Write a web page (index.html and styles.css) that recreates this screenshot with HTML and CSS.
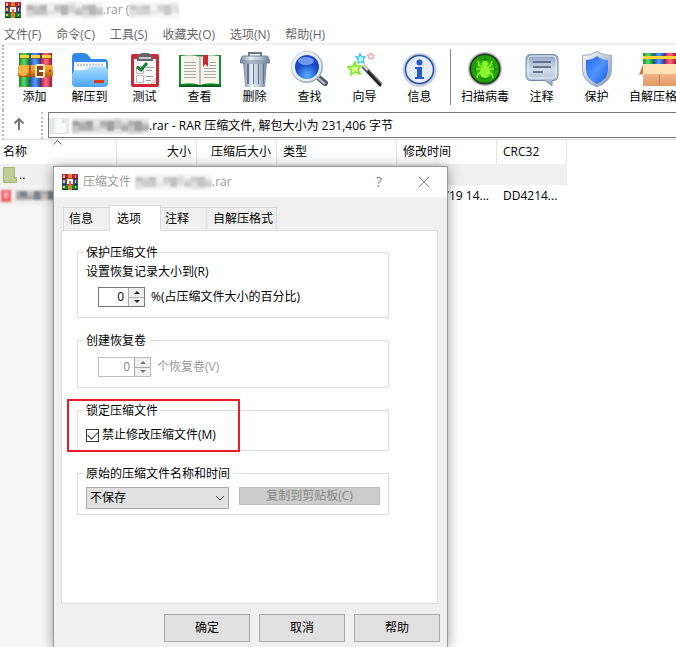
FILE: index.html
```html
<!DOCTYPE html>
<html lang="zh-CN">
<head>
<meta charset="utf-8">
<meta name="viewport" content="width=device-width, initial-scale=1">
<title>WinRAR</title>
<link rel="stylesheet" href="styles.css">
</head>
<body>
<svg class="defs" aria-hidden="true">
  <defs>
    <linearGradient id="gGreen" x2="1"><stop stop-color="#178a2d"/><stop offset=".45" stop-color="#5fd873"/><stop offset="1" stop-color="#0b6d22"/></linearGradient>
    <linearGradient id="gBlue" x2="1"><stop stop-color="#1b50b8"/><stop offset=".45" stop-color="#5b9cf7"/><stop offset="1" stop-color="#163f9c"/></linearGradient>
    <linearGradient id="gRed" x2="1"><stop stop-color="#c01836"/><stop offset=".45" stop-color="#ff6c85"/><stop offset="1" stop-color="#a80f2c"/></linearGradient>
    <linearGradient id="gBelt" x2="0" y2="1"><stop stop-color="#f7b53c"/><stop offset=".5" stop-color="#e8901c"/><stop offset="1" stop-color="#a95a08"/></linearGradient>
    <linearGradient id="gFolder" x2="0" y2="1"><stop stop-color="#a5dcff"/><stop offset="1" stop-color="#4ba6f5"/></linearGradient>
    <linearGradient id="gSteel" x2="1"><stop stop-color="#7c8ca3"/><stop offset=".35" stop-color="#e8eef5"/><stop offset=".65" stop-color="#bcc9d9"/><stop offset="1" stop-color="#74849c"/></linearGradient>
    <linearGradient id="gBubble" x2="0" y2="1"><stop stop-color="#8c9fbd"/><stop offset=".5" stop-color="#d3deec"/><stop offset="1" stop-color="#9aaeca"/></linearGradient>
    <linearGradient id="gRim" x2="1" y2="1"><stop stop-color="#fff"/><stop offset="1" stop-color="#8494ab"/></linearGradient>
    <linearGradient id="gShield" x2="1" y2="1"><stop stop-color="#2665e8"/><stop offset=".5" stop-color="#4f94ff"/><stop offset="1" stop-color="#1d58e0"/></linearGradient>
    <linearGradient id="gBox" x2="0" y2="1"><stop stop-color="#f9c8a2"/><stop offset="1" stop-color="#e39a68"/></linearGradient>
    <radialGradient id="gLens" cy=".85"><stop stop-color="#58b0ff"/><stop offset="1" stop-color="#1747c8"/></radialGradient>
    <radialGradient id="gScan"><stop stop-color="#55e80c"/><stop offset="1" stop-color="#1c9604"/></radialGradient>

    <symbol id="rar" viewBox="0 0 16 16">
      <path fill="#b61c4c" d="M0 0h16v5H0z"/><path fill="#2c55b5" d="M0 5h16v6H0z"/><path fill="#168239" d="M0 11h16v5H0z"/>
      <path fill="#551630" d="M0 4h16v1H0z"/><path fill="#14286c" d="M0 10h16v1H0z"/><path fill="#08481b" d="M0 15h16v1H0z"/>
      <path fill="#f1c04e" d="M1 1h2v3H1zM1 6h2v3H1zM1 12h2v2H1zM13 1h1v3h-1zM13 6h1v3h-1zM13 12h1v2h-1z"/>
      <path fill="#d58428" d="M6 0h4v16H6z"/><path fill="#9d351b" d="M4 4h8v7H4z"/><path fill="#fff" d="M5 10V6q0-1 1-1h4q1 0 1 1v4H9V7H7v3z"/><path fill="#e96534" d="M7 7h2v4H7z"/>
    </symbol>
    <symbol id="mosaic" viewBox="0 0 77 16">
      <path fill="#f3f3f3" d="M0 0h77v16H0z"/>
      <path fill="#d6d6d6" d="M0 3h21v10H0zM28 3h21v8H28zM49 5h28v8H49z"/>
      <path fill="#b4b4b4" d="M1 3h6v5H1zM14 3h7v5h-7zM35 3h7v10h-7zM63 3h7v10h-7z"/>
      <path fill="#c2c2c2" d="M7 5h7v8H7zM14 8h7v5h-7zM28 3h7v5h-7zM49 8h7v5h-7zM56 3h7v5h-7zM70 8h7v5h-7z"/>
      <path fill="#e4e4e4" d="M0 13h7v3H0zM21 8h7v5h-7zM42 0h7v3h-7zM56 13h14v3H56z"/>
    </symbol>
  </defs>
</svg>

<main class="window">
  <header class="titlebar">
    <svg class="app-icon"><use href="#rar"/></svg>
    <svg class="mosaic"><use href="#mosaic"/></svg>
    <span>.rar (</span>
    <svg class="mosaic mosaic-short" viewBox="0 0 53 16" preserveAspectRatio="xMinYMid slice"><use href="#mosaic" width="77" height="16"/></svg>
  </header>

  <nav class="menu">
    <a href="#">文件(F)</a><a href="#">命令(C)</a><a href="#">工具(S)</a><a href="#">收藏夹(O)</a><a href="#">选项(N)</a><a href="#">帮助(H)</a>
  </nav>

  <div class="toolbar">
    <button class="tool"><svg viewBox="0 0 48 40">
      <path fill="url(#gGreen)" d="M8 4h11v34H8z"/><path fill="url(#gBlue)" d="M19 4h11v34H19z"/><path fill="url(#gRed)" d="M30 4h11v34H30z"/>
      <path fill="#ffd633" d="M9 6h9v3H9zM20 6h9v3h-9zM31 6h9v3h-9z"/><path fill="#795000" opacity=".5" d="M8 9h33v1H8z"/>
      <rect x="7" y="16" width="35" height="12" rx="2" fill="url(#gBelt)"/><circle cx="12" cy="22" r="5" fill="#f5b64e"/><path fill="#ab5d0b" d="M18 16h2v12h-2z"/>
      <rect x="25" y="16" width="8" height="12" rx="1" fill="#8c4513" stroke="#f3e3cd" stroke-width="2"/><path stroke="#fff" stroke-width="2" d="M28 22h5"/><circle cx="39" cy="22" r="1" fill="#633400"/>
    </svg>添加</button>
    <button class="tool"><svg viewBox="0 0 48 40">
      <path fill="#318ae8" d="M6 8q0-4 4-4h8q3 0 5 3l2 3h13q4 0 4 4v17H6z"/><path fill="#fff" d="M8 13h32v14H8z"/><path stroke="#bccbdc" stroke-width="3" stroke-dasharray="2 1" d="M11 16h27"/>
      <path fill="url(#gFolder)" d="M6 26q1-5 5-5h6q3 0 5-2 1-1 4-1h12q4 0 4 4v12q0 4-4 4H10q-4 0-4-4z"/><path fill="#df391f" d="M28 31h10v3H28z"/>
    </svg>解压到</button>
    <button class="tool"><svg viewBox="0 0 48 40">
      <rect x="10" y="5" width="28" height="33" rx="2" fill="#cc2732"/><path fill="#f7f7f6" d="M13 10h22v25H13z"/><path fill="#d9d9d9" d="m28 35 7-7v7z"/>
      <path fill="#62666b" d="M16 12V7q0-1 3-1l1-2h8l1 2q3 0 3 1v5z"/><path fill="#c5c9ce" d="M18 8h12v2H18z"/>
      <path fill="none" stroke="#b9b9b9" d="M15.500 17.500h7v7h-7zM15.500 26.500h7v7h-7z"/><path stroke="#9d9d9d" d="M25 18.500h8M25 21.500h6M25 27.500h7M25 31.500h5"/><path fill="none" stroke="#17803a" stroke-width="3" d="m16 18 4 3 6-7"/>
    </svg>测试</button>
    <button class="tool"><svg viewBox="0 0 48 40">
      <path fill="#178c32" d="M3 6h42v32H3z"/><path fill="#075d20" d="M3 36h42v2H3z"/><path fill="#f7f5e9" d="M5 7q12-2 19 1 7-3 19-1v28q-12-2-19 1-7-3-19-1z"/>
      <path fill="#c0beb2" d="M23 7h2v29h-2z"/><path stroke="#aaa" d="M8 13.500h12M8 16.500h12M8 19.500h12M8 22.500h12M8 25.500h12M8 28.500h12M28 19.500h12M28 22.500h12M28 25.500h12M28 28.500h12M33 13.500h7M33 16.500h7"/><path fill="#cd2634" d="M27 6h5v12l-2.500-3-2.500 3z"/>
    </svg>查看</button>
    <button class="tool"><svg viewBox="0 0 48 40">
      <path fill="none" stroke="#69788c" stroke-width="2" d="M18 7V4h12v3"/><path fill="url(#gSteel)" d="M12 12h24l-2 26H14z"/><path fill="#61738c" d="M16 15h2v20h-2zM22 15h1v20h-1zM27 15h1v20h-1zM32 15h1v20h-1z"/>
      <path fill="url(#gSteel)" stroke="#73849c" d="M11.500 7h25l2 4v3h-29v-3z"/><path stroke="#73849c" d="M9 12h30"/>
    </svg>删除</button>
    <button class="tool"><svg viewBox="0 0 48 40">
      <path stroke="#525b68" stroke-width="6" stroke-linecap="round" d="m33 29 6 5"/><path stroke="#bac3cd" stroke-width="2" d="m31 28 8 7"/>
      <circle cx="21" cy="18" r="16" fill="#a3afc0"/><circle cx="20.500" cy="17.500" r="15" fill="#e9eef4"/><circle cx="21" cy="18" r="12" fill="url(#gLens)"/><ellipse cx="20" cy="12" rx="8" ry="4" fill="#a9cfff" opacity=".6"/>
    </svg>查找</button>
    <button class="tool"><svg viewBox="0 0 48 40">
      <path stroke="#444" stroke-width="4" d="m22 17 18 19"/><path stroke="#222" stroke-width="2" d="m27 23 13 14"/><path stroke="#ccc" stroke-width="3" d="m22 16 5 5"/><path stroke="#999" d="m29 22 12 13"/>
      <path fill="#d9ff8c" stroke="#79e626" stroke-width="1.500" d="m14 13 1 4 5 0-3 4 2 4-5-2-4 3v-5l-3-3 5-1z"/>
      <path fill="#cffbff" stroke="#35c7e8" stroke-width="1.300" d="m19 5 2 3 3 0-2 3 1 3-3-1-3 1v-4l-2-2 3 0z"/><path fill="#fff" stroke="#f18a8a" d="m30 4 1 2 2 0-1 2 0 2-2-1-2 1v-2l-2-2h3z"/>
    </svg>向导</button>
    <button class="tool"><svg viewBox="0 0 48 40">
      <circle cx="23.500" cy="21" r="17" fill="#c7cfda"/><circle cx="23.500" cy="20.500" r="14" fill="#e6edf6" stroke="#244fa8" stroke-width="1.500"/><circle cx="23.500" cy="13.500" r="3" fill="#2859cf"/><path fill="#2859cf" d="M19 18h7v10h2v2h-9v-2h2v-8h-2z"/>
    </svg>信息</button>
    <span class="separator"></span>
    <button class="tool"><svg viewBox="0 0 48 40">
      <circle cx="24" cy="20" r="17" fill="#b7bcbb"/><circle cx="24" cy="20" r="15.500" fill="#20312a"/><circle cx="24" cy="20" r="14" fill="url(#gScan)"/>
      <path fill="none" stroke="#148006" d="M24 6v28M10 20h28"/><circle cx="24" cy="20" r="10" fill="none" stroke="#148006"/>
      <path fill="none" stroke="#8cf52f" stroke-width="1.500" d="m17 12 1 4 4 3M31 12l-1 4-4 3M15 20h18M16 29l1-4 4-2M32 29l-1-4-4-2"/><ellipse cx="24" cy="23" rx="5" ry="6" fill="#8cf52f"/><circle cx="24" cy="15" r="3" fill="#8cf52f"/>
    </svg>扫描病毒</button>
    <button class="tool"><svg viewBox="0 0 48 40">
      <path fill="url(#gBubble)" stroke="#7388a8" d="M13 5.500h22q5 0 5 5v16q0 5-5 5h-1v5l-7-5H13q-5 0-5-5v-16q0-5 5-5z"/><path fill="none" stroke="#edf2f8" d="M13 7h22q3 0 3 4v14q0 4-3 4H13q-3 0-3-4V11q0-4 3-4z"/><path stroke="#475871" stroke-width="1.500" d="M15 13h18M15 18h18M15 23h10"/>
    </svg>注释</button>
    <button class="tool"><svg viewBox="0 0 48 40">
      <path fill="url(#gRim)" stroke="#9baabe" d="M24 2.500q6 4 14.500 4v14q0 12-14.500 17.500Q9.500 32.500 9.500 20.500v-14Q18 6.500 24 2.500z"/><path fill="url(#gShield)" d="M24 7q5 4 11 4v10q0 9-11 14-11-5-11-14V11q6 0 11-4z"/>
    </svg>保护</button>
    <button class="tool tool-wide"><svg viewBox="0 0 48 40">
      <path fill="url(#gGreen)" d="M8 4h11v14H8z"/><path fill="url(#gBlue)" d="M19 4h11v14H19z"/><path fill="url(#gRed)" d="M30 4h11v14H30z"/><path fill="#ffd633" d="M8 7h33v3H8z"/>
      <path fill="url(#gBox)" d="M8 16h34v21H8z"/><path fill="#ffe2b4" d="M8 15h34l5 10H8z"/><path fill="#d17a45" d="m8 15-4 11 4-1zM24 26h1v11h-1z"/>
    </svg>自解压格式</button>
  </div>

  <div class="address">
    <button class="up" aria-label="上移"><svg viewBox="0 0 12 14"><path fill="none" stroke="#777" stroke-width="2" d="M6 13V2M1.500 6.500 6 2l4.500 4.500"/></svg></button>
    <div class="path">
      <svg class="paper" viewBox="0 0 20 16"><path fill="#e7e9e9" d="M0 0h20v16H0z"/><path fill="#fafafa" d="M6 1h7l4 4v10H6z"/><path fill="#dfe2e2" d="M13 1v4h4z"/></svg>
      <svg class="mosaic mosaic-dark"><use href="#mosaic"/></svg>
      <span>.rar - RAR 压缩文件, 解包大小为 231,406 字节</span>
    </div>
  </div>

  <section class="files">
    <table>
      <colgroup><col class="c-name"><col class="c-size"><col class="c-size"><col class="c-type"><col class="c-date"><col class="c-crc"></colgroup>
      <thead><tr><th class="sorted">名称<svg viewBox="0 0 9 5"><path fill="none" stroke="#666" d="m.5 4.500 4-4 4 4"/></svg></th><th class="num">大小</th><th class="num">压缩后大小</th><th>类型</th><th>修改时间</th><th>CRC32</th></tr></thead>
      <tbody>
        <tr class="current"><td><span class="entry"><svg class="folder" viewBox="0 0 14 16"><path fill="#c2cc98" stroke="#a9b56e" d="M.500.500h11v10h2v5H.500z"/></svg>..</span></td><td></td><td></td><td></td><td></td><td></td></tr>
        <tr><td><span class="entry"><svg class="blurred" viewBox="0 0 54 18"><path fill="#eee" d="M0 0h54v18H0z"/><path fill="#ee606b" d="M1 3h10v12H1z"/><path fill="#f9b4b8" d="M4 5h4v6H4z"/><path fill="#aaa" d="M16 4h38v9H16z"/><path fill="#77818c" d="M20 4h7v6h-7zM34 4h6v9h-6zM48 4h6v8h-6z"/><path fill="#c9c2ba" d="M27 4h7v4h-7zM42 7h6v6h-6z"/></svg></span></td><td></td><td></td><td></td><td class="num">/19 14...</td><td>DD4214...</td></tr>
      </tbody>
    </table>
  </section>
</main>

<form class="dialog" role="dialog" aria-labelledby="dialog-title" onsubmit="return false">
  <header class="dialog-title">
    <svg class="app-icon"><use href="#rar"/></svg>
    <span id="dialog-title">压缩文件</span>
    <svg class="mosaic"><use href="#mosaic"/></svg><span>.rar</span>
    <button type="button" class="caption help" aria-label="帮助">?</button>
    <button type="button" class="caption" aria-label="关闭"><svg viewBox="0 0 12 12"><path stroke="#888" d="m1 1 10 10M11 1 1 11"/></svg></button>
  </header>
  <div class="tabs" role="tablist">
    <button type="button" role="tab">信息</button><button type="button" role="tab" aria-selected="true">选项</button><button type="button" role="tab">注释</button><button type="button" role="tab">自解压格式</button>
  </div>
  <div class="panel" role="tabpanel">
    <fieldset class="recovery">
      <legend>保护压缩文件</legend>
      <label for="record">设置恢复记录大小到(R)</label>
      <div class="line">
        <span class="spinner"><input id="record" type="text" inputmode="numeric" value="0"><span class="steps"><button type="button" aria-label="增加"></button><button type="button" class="down" aria-label="减少"></button></span></span>
        <span>%(占压缩文件大小的百分比)</span>
      </div>
    </fieldset>
    <fieldset class="volumes">
      <legend>创建恢复卷</legend>
      <div class="line">
        <span class="spinner spinner-wide"><input id="volumes" type="text" inputmode="numeric" value="0" disabled><span class="steps"><button type="button" aria-label="增加" disabled></button><button type="button" class="down" aria-label="减少" disabled></button></span></span>
        <label for="volumes" class="muted">个恢复卷(V)</label>
      </div>
    </fieldset>
    <fieldset class="lock">
      <legend>锁定压缩文件</legend>
      <label class="check"><input type="checkbox" checked>禁止修改压缩文件(M)</label>
      <span class="highlight"></span>
    </fieldset>
    <fieldset class="original">
      <legend>原始的压缩文件名称和时间</legend>
      <div class="choice">
        <span class="select"><select aria-label="原始的压缩文件名称和时间"><option>不保存</option></select><svg viewBox="0 0 10 6"><path fill="none" stroke="#444" d="m1 1 4 4 4-4"/></svg></span>
        <button type="button" class="copy" disabled>复制到剪贴板(C)</button>
      </div>
    </fieldset>
  </div>
  <footer class="actions"><button>确定</button><button type="button">取消</button><button type="button">帮助</button></footer>
</form>
</body>
</html>
```

FILE: styles.css
```css
* { box-sizing: border-box; }

body {
  margin: 0;
  height: 100vh;
  position: relative;
  overflow: hidden;
  background: #fff;
  color: #000;
  font: 12px/16px "Open Sans", "Noto Sans CJK SC", sans-serif;
}

button, input, select { font: inherit; color: inherit; margin: 0; padding: 0; border-radius: 0; }
svg { display: block; flex: none; }
.defs { position: absolute; width: 0; height: 0; }

.window { height: 100%; display: flex; flex-direction: column; white-space: nowrap; }

.titlebar { display: flex; align-items: center; height: 20px; padding-left: 5px; color: #999; }
.app-icon { width: 16px; height: 16px; margin-right: 5px; }
.mosaic { width: 77px; height: 16px; filter: blur(1px); }
.mosaic-short { width: 50px; opacity: .7; }
.mosaic-dark { filter: blur(1px) brightness(.85) contrast(1.3); }

.menu { display: flex; gap: 15px; height: 25px; padding: 7px 4px 0; border-bottom: 2px solid #f0f0f0; }
.menu a { color: #666; text-decoration: none; }

.toolbar { display: flex; height: 65px; padding: 4px 0 0 3px; margin-left: 2px; overflow: hidden; border-left: 2px dotted #bbb; }
.tool { flex: none; width: 55px; border: 0; background: none; display: flex; flex-direction: column; align-items: center; justify-content: flex-start; height: 56px; }
.tool svg { width: 48px; height: 40px; }
.tool-wide { width: 70px; }
.separator { flex: none; width: 1px; height: 56px; margin: 0 5px 0 3px; background: #888; }
.separator + .tool { width: 58px; }

.address { display: flex; height: 30px; margin-left: 2px; padding-top: 2px; border-left: 2px dotted #bbb; border-bottom: 1px solid #ddd; }
.up { width: 39px; border: 0; border-right: 2px dotted #bbb; background: none; display: grid; place-items: center; padding: 0 8px 4px 0; }
.up svg { width: 12px; height: 14px; }
.path { flex: 1; display: flex; align-items: center; height: 26px; margin-left: 5px; padding-top: 1px; border: 1px solid #777; border-right: 0; }
.paper { width: 20px; height: 16px; margin-right: 3px; }

.files { flex: 1; background: linear-gradient(to right, #f7f7f7 116px, #fff 116px); }
table { border-collapse: separate; border-spacing: 0; table-layout: fixed; width: 567px; }
.c-name { width: 117px; }
.c-size { width: 80px; }
.c-type { width: 120px; }
.c-date { width: 100px; }
.c-crc { width: 70px; }
th { height: 24px; padding: 0 5px 0 6px; text-align: left; font-weight: 400; background: #fff; border-right: 1px solid #e3e3e3; }
th:first-child { padding-left: 3px; }
.sorted { position: relative; }
.sorted svg { position: absolute; top: 0; left: 53px; width: 9px; height: 5px; }
th.num, td.num { text-align: right; }
td { height: 21px; padding: 0 6px; }
td:first-child { padding: 0; }
td.num { padding-right: 8px; }
.current { background: #f0f0f0; }
.entry { display: flex; align-items: center; gap: 2px; }
.folder { width: 14px; height: 16px; margin-left: 3px; }
.blurred { width: 54px; height: 18px; filter: blur(1px); }

.dialog {
  position: absolute;
  left: 53px;
  top: 166px;
  bottom: 0;
  width: 395px;
  display: flex;
  flex-direction: column;
  padding-bottom: 5px;
  background: #f0f0f0;
  border: 1px solid #999;
  border-bottom: 0;
  box-shadow: 0 1px 12px rgba(0, 0, 0, .4);
  white-space: nowrap;
}
.dialog-title { display: flex; align-items: center; height: 30px; padding: 0 8px; background: #fff; color: #999; }
.dialog-title .mosaic { margin-left: 4px; opacity: .8; }
.caption { width: 30px; height: 30px; border: 0; background: none; color: #888; display: grid; place-items: center; }
.caption svg { width: 12px; height: 12px; }
.help { margin: 0 15px 0 auto; font-size: 14px; }

.tabs { display: flex; align-items: flex-end; height: 33px; padding-left: 9px; }
.tabs button { height: 23px; padding: 0 4px; border: 1px solid #dcdcdc; border-bottom: 0; background: #f0f0f0; text-align: left; }
.tabs button:nth-child(1) { width: 46px; padding-left: 5px; border-right: 0; }
.tabs button:nth-child(2) { width: 52px; height: 26px; margin-bottom: -1px; padding-left: 7px; background: #fff; z-index: 1; }
.tabs button:nth-child(3) { width: 45px; border-left: 0; border-right: 0; }
.tabs button:nth-child(4) { width: 71px; padding-left: 6px; }

.panel { flex: 1; margin: 0 9px 0 7px; padding: 12px 48px 0 15px; border: 1px solid #dcdcdc; background: #fff; }
fieldset { position: relative; min-width: 0; margin: 0 0 13px; padding: 0 8px; border: 1px solid #dcdcdc; }
legend { margin-left: -2px; padding: 2px 2px 0; }
.recovery { padding-top: 3px; padding-bottom: 10px; }
.volumes { padding-top: 8px; padding-bottom: 10px; }
.lock { padding-top: 8px; padding-bottom: 7px; }
.original { padding-top: 5px; padding-bottom: 5px; }
.recovery > label { display: block; margin-bottom: 7px; }
.line { display: flex; align-items: center; gap: 6px; padding-left: 12px; }
.muted { color: #999; }

.spinner { display: flex; width: 47px; height: 20px; border: 1px solid #777; }
.spinner-wide { width: 53px; border-color: #bbb; }
.spinner input { flex: 1; min-width: 0; border: 0; padding-right: 4px; text-align: right; background: #fff; outline: 0; }
.spinner input:disabled { color: #888; }
.steps { width: 16px; display: flex; flex-direction: column; background: #aaa; gap: 1px; padding: 0 0 0 1px; }
.steps button { flex: 1; border: 0; background: #f0f0f0; display: grid; place-items: center; }
.steps button::before { content: ""; border: 3px solid transparent; border-top: 0; border-bottom: 3px solid #222; }
.steps .down::before { transform: rotate(180deg); }
.steps button:disabled::before { border-bottom-color: #777; }

.check { display: flex; align-items: center; gap: 3px; }
.check input { appearance: none; width: 13px; height: 13px; border: 1px solid #333; display: grid; place-items: center; background: #fff; }
.check input:checked::before { content: ""; width: 9px; height: 5px; margin-bottom: 3px; border: solid #333; border-width: 0 0 1px 1px; transform: rotate(-45deg); }
.highlight { position: absolute; top: -20px; left: -11px; width: 173px; height: 53px; border: 2px solid #ed1c24; pointer-events: none; }

.choice { display: flex; align-items: flex-start; gap: 10px; }
.select { position: relative; width: 143px; }
.select select { appearance: none; display: block; width: 100%; height: 22px; padding: 0 3px; border: 1px solid #aaa; background: #e1e1e1; }
.select svg { position: absolute; right: 4px; top: 8px; width: 10px; height: 6px; pointer-events: none; }
.copy { flex: 1; height: 18px; border: 1px solid #bbb; background: #ccc; color: #888; line-height: 16px; }

.actions { display: flex; justify-content: flex-end; gap: 9px; padding: 10px 7px 0; }
.actions button { width: 86px; height: 28px; border: 1px solid #aaa; background: #e1e1e1; }
```
